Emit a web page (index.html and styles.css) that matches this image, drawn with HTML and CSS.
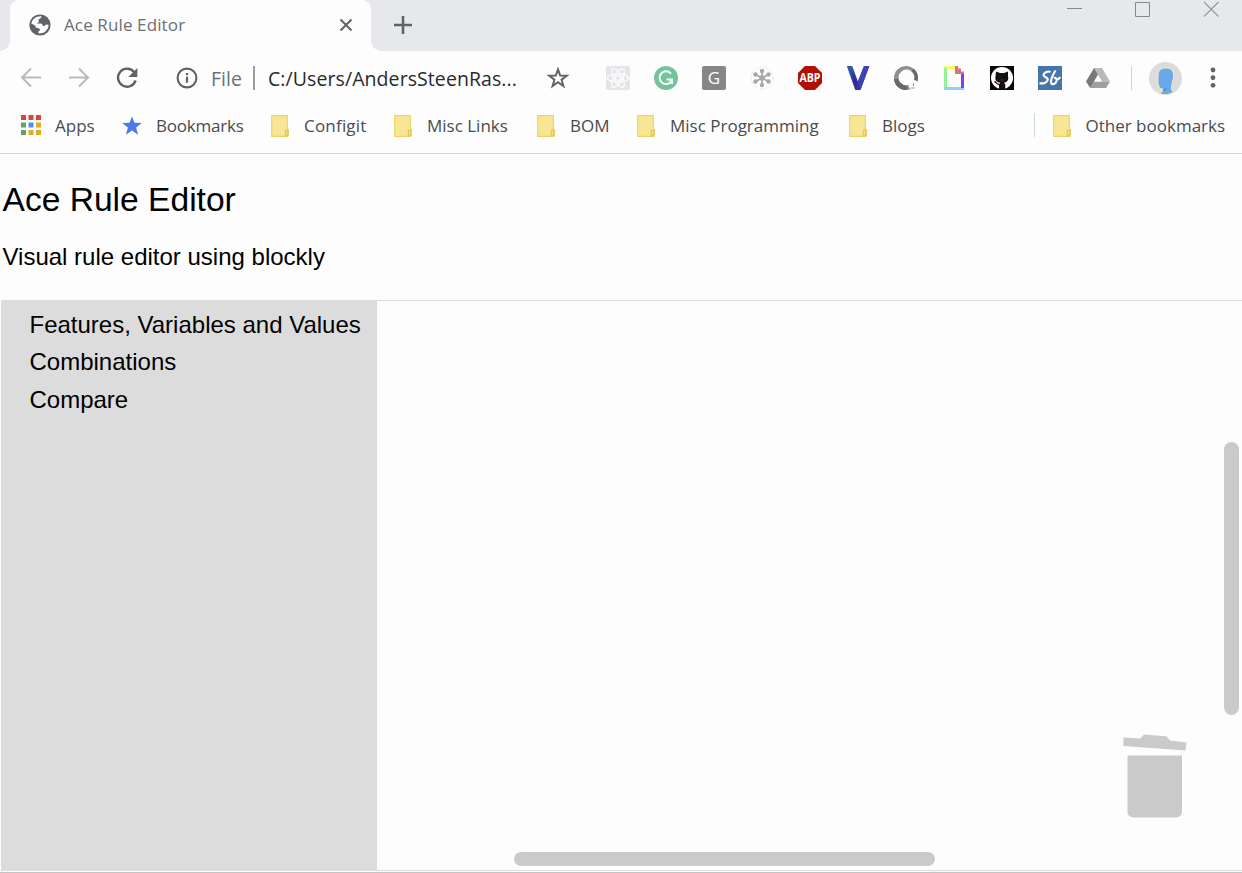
FILE: index.html
```html
<!DOCTYPE html>
<html lang="en">
<head>
<meta charset="utf-8">
<title>Ace Rule Editor</title>
<link rel="stylesheet" href="styles.css">
</head>
<body>
<svg class="defs" width="0" height="0">
  <symbol id="folder" viewBox="0 0 18 22">
    <path d="M.7 .7H16.3V14.5H17.3V20.8L16.6 21.3H.7z" fill="#f8e595" stroke="#ecd468" stroke-width="1.2"/>
    <path d="M14.3 20.5V15.2h2.6v5.6h-2.6" fill="#f5df7f" stroke="#dfc24b"/>
  </symbol>
</svg>
<div class="window">
  <header class="tabstrip">
    <div class="tab">
      <svg class="globe" width="22" height="22" viewBox="0 0 22 22"><circle cx="11" cy="11" r="10.6" fill="#5f6368"/><path d="M12.5 2.2C12.5 4.5 10 4.5 9.5 5.5c-.5 1.2.8 1.5.3 2.5-.6 1-2 .3-2 1.5h4c2 .2 1.500 2.500 3 2.500 1.300 0 1.500-1.500 3-1.500l1.800.4c0 3.500-2.800 7-6.400 8.200-1.600.4-2.700.4-3.900.2v-2c1.200-.2 2-1.200 1.500-2.300-.7-1-2.800-.4-3.700-1.300-.7-.8-.4-1.800-1.500-2.500L2.300 9.500C3 5.500 7 1.800 12.500 2.200z" fill="#fff"/></svg>
      <span class="tab-title">Ace Rule Editor</span>
      <svg class="tab-close" width="14" height="14" viewBox="0 0 14 14"><path d="M1.500 1.500l11 11M12.500 1.500l-11 11" stroke="#5f6368" stroke-width="2"/></svg>
    </div>
    <svg class="new-tab" width="18" height="18" viewBox="0 0 18 18"><path d="M9 0v18M0 9h18" stroke="#5f6368" stroke-width="2.6"/></svg>
    <div class="window-controls">
      <svg width="16" height="17" viewBox="0 0 16 17"><path d="M1 8.500h15" stroke="#868789"/></svg>
      <svg width="16" height="17" viewBox="0 0 16 17"><path d="M1.500 2.500h14v14h-14z" fill="none" stroke="#868789"/></svg>
      <svg width="16" height="17" viewBox="0 0 16 17"><path d="M1 2l14.500 14.500M15.500 2L1 16.500" stroke="#97989a" stroke-width="1.1"/></svg>
    </div>
  </header>

  <div class="toolbar">
    <svg class="nav" width="22" height="22" viewBox="0 0 22 22"><path d="M21 10.500H2M11 1.500L2 10.500l9 9" fill="none" stroke="#b8babb" stroke-width="2"/></svg>
    <svg class="nav" width="22" height="22" viewBox="0 0 22 22"><path d="M1 10.500h19M11 1.500l9 9-9 9" fill="none" stroke="#b8babb" stroke-width="2"/></svg>
    <svg class="reload" width="22" height="22" viewBox="0 0 22 22"><path d="M18.200 5.200A9 9 0 1 0 19.600 13.500" fill="none" stroke="#5f6368" stroke-width="2.4"/><path d="M21.300 1v9h-9z" fill="#5f6368"/></svg>
    <svg class="info" width="22" height="22" viewBox="0 0 22 22"><circle cx="11" cy="11" r="9.4" fill="none" stroke="#5f6368" stroke-width="2.1"/><path d="M11 9.800v6M11 6v2.200" stroke="#5f6368" stroke-width="2.2"/></svg>
    <span class="scheme">File</span>
    <i class="url-divider"></i>
    <span class="url">C:/Users/AndersSteenRas...</span>
    <svg class="star" width="24" height="24" viewBox="0 0 24 24"><path d="M12 3.400l2.200 6.100 6.600.2-5.200 4 1.800 6.300-5.400-3.700L6.600 20l1.800-6.300-5.200-4 6.600-.2z" fill="none" stroke="#5f6368" stroke-width="2"/></svg>
    <div class="extensions">
      <svg viewBox="0 0 24 24"><rect width="24" height="24" rx="2" fill="#e4e5e9"/><g fill="none" stroke="#fff" stroke-width="1.5" stroke-dasharray="2 .7"><ellipse cx="12" cy="12" rx="10.5" ry="4"/><ellipse cx="12" cy="12" rx="10.5" ry="4" transform="rotate(60 12 12)"/><ellipse cx="12" cy="12" rx="10.5" ry="4" transform="rotate(120 12 12)"/><circle cx="12" cy="12" r="2.5"/></g></svg>
      <svg viewBox="0 0 24 24"><circle cx="12" cy="12" r="12" fill="#74c49b"/><path d="M17 7.700A6.400 6.400 0 1 0 17.500 15M12.500 13.500H18V18" fill="none" stroke="#fff" stroke-width="2"/></svg>
      <svg viewBox="0 0 24 24"><rect width="24" height="24" rx="2" fill="#868686"/><text x="12" y="18" class="g-letter">G</text></svg>
      <svg viewBox="0 0 24 24"><circle cx="12" cy="12" r="11" fill="none" stroke="#e3e4e4" stroke-dasharray="2 1.5"/><g stroke="#a6a8a9" stroke-width="1.8"><path d="M12 5v14M5.500 8.500l13 7M18.500 8.500l-13 7"/></g><g fill="#a6a8a9"><circle cx="12" cy="12" r="2.8"/><circle cx="12" cy="5" r="2.2"/><circle cx="12" cy="19" r="2.2"/><circle cx="5.5" cy="8.5" r="2.2"/><circle cx="18.5" cy="8.5" r="2.2"/><circle cx="5.5" cy="15.5" r="2.2"/><circle cx="18.5" cy="15.5" r="2.2"/></g></svg>
      <svg viewBox="0 0 24 24"><path d="M7 0h10l7 7v10l-7 7H7l-7-7V7z" fill="#b11104"/><text x="12" y="16.3" class="abp" textLength="21" lengthAdjust="spacingAndGlyphs">ABP</text></svg>
      <svg viewBox="0 0 24 24"><defs><linearGradient id="v" x2="1" y2="1"><stop stop-color="#3166b5"/><stop offset=".5" stop-color="#272d91"/><stop offset="1" stop-color="#5b35b5"/></linearGradient></defs><path d="M.8 0h5.400l5.700 15.500L18 0h5.300L14.500 24H9.300z" fill="url(#v)"/><path d="M18 0h5.300L14.500 24l-2.600-8.500z" fill="#4241b3"/></svg>
      <svg viewBox="0 0 24 24"><circle cx="12" cy="12" r="12" fill="#909090"/><path d="M0 13a12 12 0 0 0 13 11l1-6C9 18 5 17 4 13zM20 3c4 4 4.500 8 3.500 12l-4-1c1-4 0-6-2-9z" fill="#686868"/><circle cx="12.5" cy="11.5" r="7.9" fill="#fdfdfd"/><circle cx="19.5" cy="19" r="5" fill="#fff"/><path d="M19.500 17v3M17 22h4" stroke="#999" stroke-width="1.2"/></svg>
      <svg viewBox="0 0 24 24"><path d="M2 1.500h13" stroke="#fcf462" stroke-width="3"/><path d="M3.500 2v20" stroke="#93f394" stroke-width="3"/><path d="M2 22.500h20" stroke="#8dd2ff" stroke-width="3"/><path d="M20.500 8v14" stroke="#8938f5" stroke-width="3"/><path d="M13 0v8h9V5.500h-3V2.500h-3V0z" fill="#d87471"/></svg>
      <svg viewBox="0 0 24 24"><rect width="24" height="24" fill="#080707"/><circle cx="12" cy="12" r="11" fill="#fff"/><path d="M6 5.500l4 1.600h4l4-1.600v4.700c1 4-1 6-4 6.500l1.300 1.800V23.500H9v-5l1.200-1.800c-3.500-.5-5.500-2.500-4.700-6.500z" fill="#151010"/><path d="M4.500 15.500c2 .5 2 3 4.500 3" fill="none" stroke="#151010" stroke-width="1.3"/><path d="M10 14h4" stroke="#721c1c"/></svg>
      <svg viewBox="0 0 24 24"><rect width="24" height="24" fill="#4675aa"/><path d="M12.500 6C9.500 4.500 5.500 7 5.500 9c0 2.500 5 2 4.200 5-.7 2.800-4.500 4-8.200 3.200M17.500 4.500c-2.500 4-4.800 10-4.300 12.500.6 2.500 4.500.8 5.300-2 .6-2.500-1-3.800-2.800-3M19 13c1 .5 2.500-.5 3-2" fill="none" stroke="#fff" stroke-width="2.2"/></svg>
      <svg viewBox="0 0 24 24"><path d="M8 2h8l8 13.500h-8z" fill="#b8b9b9"/><path d="M8 2l4 6.500L4.300 22 0 15.500z" fill="#777879"/><path d="M8 15.500h16L20 22H4.300z" fill="#9d9e9f"/><path d="M12 9.500l3.500 6h-7z" fill="#fff"/></svg>
    </div>
    <i class="profile-divider"></i>
    <svg class="avatar" width="33" height="33" viewBox="0 0 33 33"><circle cx="16.5" cy="16.500" r="16.500" fill="#dcdcdc"/><path d="M9 14C9 8.500 11.500 6 17 6s7.500 3 7.500 7.500c0 5-2 8-2 12.500 0 2.500 1 3.300 1.800 4-5 3.500-10.500 3.500-15 .5 3.500 0 5-1 4.800-3.200C10.500 27 9 24 9 20.500z" fill="#67a9e9" stroke="#f6eab9"/><path d="M14.200 27c1.800 0 3-.5 3.800-1.800-.3 2.500-1.600 3.800-3.900 4.300z" fill="#4b8dd0"/></svg>
    <svg class="menu" width="6" height="22" viewBox="0 0 6 22"><g fill="#5f6368"><circle cx="3" cy="3" r="2.4"/><circle cx="3" cy="10.7" r="2.4"/><circle cx="3" cy="18.3" r="2.4"/></g></svg>
  </div>

  <nav class="bookmarks">
    <a class="bookmark"><svg width="20" height="20" viewBox="0 0 20 20"><path d="M0 0h5v5H0zM7.500 0h5v5h-5zM15 0h5v5h-5z" fill="#da4538"/><path d="M0 7.500h5v5H0zM0 15h5v5H0z" fill="#65a35d"/><path d="M7.500 7.500h5v5h-5z" fill="#518cf0"/><path d="M15 7.500h5v5h-5zM7.500 15h5v5h-5zM15 15h5v5h-5z" fill="#e5ab25"/></svg><span>Apps</span></a>
    <a class="bookmark"><svg width="20" height="20" viewBox="0 0 20 20"><path d="M10 1.500l2.500 6.300 7.300.2-5.700 4.500 2 7.200L10 15.500l-6.100 4.200 2-7.200L.2 8l7.300-.2z" fill="#4c79e8"/></svg><span class="tight">Bookmarks</span></a>
    <a class="bookmark folder"><svg width="18" height="22"><use href="#folder"/></svg><span class="loose">Configit</span></a>
    <a class="bookmark folder"><svg width="18" height="22"><use href="#folder"/></svg><span>Misc Links</span></a>
    <a class="bookmark folder"><svg width="18" height="22"><use href="#folder"/></svg><span>BOM</span></a>
    <a class="bookmark folder"><svg width="18" height="22"><use href="#folder"/></svg><span>Misc Programming</span></a>
    <a class="bookmark folder"><svg width="18" height="22"><use href="#folder"/></svg><span>Blogs</span></a>
    <a class="bookmark folder other"><svg width="18" height="22"><use href="#folder"/></svg><span>Other bookmarks</span></a>
  </nav>

  <main class="page">
    <h1>Ace Rule Editor</h1>
    <p>Visual rule editor using blockly</p>
    <section class="editor">
      <ul class="toolbox">
        <li>Features, Variables and Values</li>
        <li>Combinations</li>
        <li>Compare</li>
      </ul>
      <div class="workspace">
        <i class="scroll-vertical"></i>
        <i class="scroll-horizontal"></i>
        <svg class="trash" width="66" height="86" viewBox="0 0 66 86"><g fill="#cacaca"><path d="M1.500 3.500l17 1 3.500-4L44.500 2.300l3.500 4.200L64.500 8.500l-1 8.100L1.200 12z"/><path d="M5.500 21.500H60v57q-1 4.500-6 5H11.500q-5-.5-6-5z"/></g></svg>
      </div>
    </section>
  </main>
</div>
</body>
</html>
```

FILE: styles.css
```css
* { box-sizing: border-box; }
body { margin: 0; background: #fdfdfd; font-family: "Open Sans", "Noto Sans", sans-serif; }
svg { display: block; flex: none; }
.defs { position: absolute; }
.window { width: 1242px; height: 873px; overflow: hidden; display: flex; flex-direction: column; }

.tabstrip { height: 51px; flex: none; background: #e7e8ec; display: flex; align-items: flex-start; padding-left: 10px; }
.tab { position: relative; width: 361px; height: 51px; background: #fdfdfd; border-radius: 9px 9px 0 0; display: flex; align-items: center; padding: 0 18px 1px 19px; }
.tab::before, .tab::after { content: ""; position: absolute; bottom: 0; width: 10px; height: 10px; }
.tab::before { right: 100%; background: radial-gradient(circle at 0 0, transparent 9.5px, #fdfdfd 10px); }
.tab::after { left: 100%; background: radial-gradient(circle at 100% 0, transparent 9.5px, #fdfdfd 10px); }
.tab-title { margin-left: 13px; padding-bottom: 2px; font-size: 17px; letter-spacing: .12px; color: #6c6f73; white-space: nowrap; }
.tab-close { margin-left: auto; }
.new-tab { margin: 16px 0 0 23px; }
.window-controls { margin-left: auto; display: flex; gap: 52px; padding-right: 23px; }
.window-controls svg:last-child { margin-left: 1px; }

.toolbar { height: 54px; flex: none; display: flex; align-items: center; padding-left: 20px; }
.nav { margin-right: 26px; }
.reload { margin-right: 38px; }
.info { margin-right: 13px; }
.scheme, .url { font-size: 19.5px; white-space: nowrap; }
.scheme { width: 42px; color: #6b7176; }
.url-divider { width: 2px; height: 24px; background: #999b9d; }
.url { width: 291px; padding-left: 13px; letter-spacing: .08px; color: #292a2c; }
.star { margin-right: 36px; }
.extensions { display: flex; gap: 24px; }
.extensions svg { width: 24px; height: 24px; }
.g-letter { font: 400 17px "Open Sans", sans-serif; fill: #fff; text-anchor: middle; }
.abp { font: 700 12px "Open Sans", sans-serif; fill: #fff; text-anchor: middle; }
.profile-divider { width: 1px; height: 24px; background: #cbd6d6; margin: 0 17px 0 21px; }
.menu { margin-left: 28px; }

.bookmarks { height: 49px; flex: none; border-bottom: 1px solid #d7d7d9; display: grid; grid-template-columns: 101px 149px 123px 143px 100px 212px 185px 1fr; padding: 8px 0 17px 21px; }
.bookmark { display: grid; grid-template-columns: 34px 1fr; align-items: center; font-size: 17px; color: #494b4e; white-space: nowrap; }
.bookmark span { padding-top: 1px; }
.folder { grid-template-columns: 33px 1fr; }
.folder svg { margin-top: 2px; }
.tight { letter-spacing: -.2px; }
.loose { letter-spacing: .2px; }
.other { border-left: 1px solid #c8dada; padding-left: 18px; grid-template-columns: 32.5px 1fr; }

.page { flex: 1; display: flex; flex-direction: column; font-family: "Liberation Sans", Arial, sans-serif; color: #000; padding: 25px 0 1px 1px; border-bottom: 1px solid #c5c5c5; }
.page h1 { margin: 0 0 0 1.5px; font-size: 33.6px; font-weight: 400; line-height: 41px; }
.page p { margin: 23px 0 0 1.5px; font-size: 24px; line-height: 28px; }
.editor { flex: 1; margin-top: 29px; display: flex; border: solid #dcdcdc; border-width: 1px 0; }
.toolbox { width: 376px; margin: 0; padding: 4.8px 0 0 28.5px; list-style: none; background: #dcdcdc; font-size: 24px; line-height: 37.5px; white-space: nowrap; }
.workspace { flex: 1; position: relative; }
.scroll-vertical, .scroll-horizontal { position: absolute; border-radius: 8px; background: #cacaca; }
.scroll-vertical { top: 141px; right: 3px; width: 15px; height: 273px; }
.scroll-horizontal { left: 137px; bottom: 4px; width: 421px; height: 14px; }
.trash { position: absolute; right: 54px; bottom: 50px; }
```
